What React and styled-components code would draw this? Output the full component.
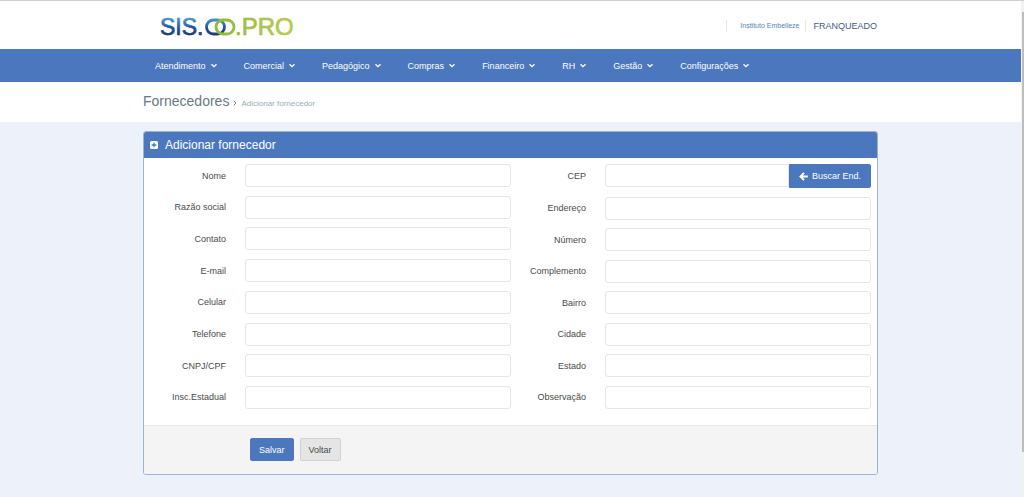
import React from 'react';
import styled, { createGlobalStyle } from 'styled-components';

const GlobalStyle = createGlobalStyle`
  * {
    box-sizing: border-box;
  }
  body {
    margin: 0;
    background: #edf1f9;
    color: #4a4a4a;
    font-family: "Liberation Sans", Arial, sans-serif;
    font-size: 9px;
  }
  input, button {
    font-family: inherit;
    font-size: inherit;
  }
  a {
    text-decoration: none;
  }
`
const Page = styled.div`
  min-height: 100vh;
  padding-right: 3px;
  border-top: 1px solid #d0d0d2;
`
const ScrollTrack = styled.div`
  position: fixed;
  top: 1px;
  right: 0;
  bottom: 0;
  width: 3px;
  padding: 11px 0 45px 1px;
  background: #f0f1f3;
`
const ScrollThumb = styled.div`
  height: 100%;
  background: #bdbdbd;
`
const Container = styled.div`
  width: 100%;
  max-width: 735px;
  margin: 0 auto;
`
const Header = styled.header`
  background: #fff;
`
const HeaderInner = styled(Container)`
  display: flex;
  align-items: center;
  justify-content: space-between;
  height: 48px;
  padding: 2px 1px 0 16px;
`
const LogoSvg = styled.svg`
  overflow: visible;
  font-size: ${({$size}) => $size};
`
const UserLinks = styled.div`
  display: flex;
  align-items: center;
`
const UserLink = styled.a`
  padding-left: ${({$large}) => $large ? '7px' : '13px'};
  padding-right: ${({$large}) => $large ? '0' : '6px'};
  border-left: 1px solid #e3e7ee;
  color: ${({$large}) => $large ? '#45598a' : '#4f86b8'};
  font-size: ${({$large}) => $large ? '9px' : '7px'};
  line-height: 12px;
`
const NavBar = styled.nav`
  background: #4b77be;
`
const NavInner = styled(Container)`
  display: flex;
  gap: 27px;
  padding: 0 12px;
`
const NavLink = styled.a`
  display: flex;
  align-items: center;
  gap: 5px;
  height: 33px;
  color: #fff;
  white-space: nowrap;
`
const PageHead = styled.div`
  background: #fff;
`
const PageHeadInner = styled(Container)`
  display: flex;
  align-items: baseline;
  gap: 4px;
  height: 40px;
  padding-top: 11px;
  h1 {
    margin: 0;
    color: #697882;
    font-size: 14px;
    font-weight: normal;
    line-height: 17px;
  }
  small {
    color: #9eacb4;
    font-size: 8px;
  }
`
const Panel = styled.form`
  display: block;
  margin-top: 9px;
  overflow: hidden;
  border: 1px solid #9bb3d3;
  border-radius: 3px;
  background: #fff;
`
const PanelTitle = styled.div`
  display: flex;
  align-items: center;
  gap: 7px;
  height: 26px;
  padding: 0 6px;
  background: #4b77be;
  color: #fff;
  h2 {
    margin: 0;
    font-size: 12px;
    font-weight: normal;
    line-height: 14px;
  }
`
const Fields = styled.div`
  display: grid;
  grid-template-columns: 1fr 1fr;
  padding: 6px 6px 16px 7px;
`
const Column = styled.div`
  display: flex;
  flex-direction: column;
  justify-content: space-between;
  min-height: 245px;
`
const FieldRow = styled.div`
  display: grid;
  grid-template-columns: 75px 1fr;
  gap: 19px;
  align-items: center;
  label {
    text-align: right;
    white-space: nowrap;
  }
`
const TextInput = styled.input`
  width: 100%;
  min-width: 0;
  height: 23px;
  padding: 0 8px;
  border: 1px solid #e3e5e8;
  border-radius: ${({$joined}) => $joined ? '3px 0 0 3px' : '3px'};
  background: #fff;
  color: #333;
  outline: none;
`
const InputGroup = styled.div`
  display: flex;
`
const Button = styled.button`
  display: flex;
  align-items: center;
  gap: 4px;
  height: 23px;
  padding: 0 8px;
  border: 1px solid ${({$primary}) => $primary ? '#4b77be' : '#d2d2d2'};
  border-radius: 2px;
  background: ${({$primary}) => $primary ? '#4b77be' : '#e5e5e5'};
  color: ${({$primary}) => $primary ? '#fff' : '#4a4a4a'};
  white-space: nowrap;
  cursor: pointer;
`
const SearchButton = styled(Button)`
  height: 24px;
  padding: 0 9px;
  border-radius: 0 2px 2px 0;
`
const Actions = styled.div`
  display: flex;
  gap: 6px;
  padding: 12px 106px 13px;
  border-top: 1px solid #e5e5e5;
  background: #f4f4f4;
`

const menu = ['Atendimento', 'Comercial', 'Pedagógico', 'Compras', 'Financeiro', 'RH', 'Gestão', 'Configurações']

const leftFields = [
  ['nome', 'Nome'],
  ['razao', 'Razão social'],
  ['contato', 'Contato'],
  ['email', 'E-mail'],
  ['celular', 'Celular'],
  ['telefone', 'Telefone'],
  ['cnpj', 'CNPJ/CPF'],
  ['inscricao', 'Insc.Estadual'],
]

const rightFields = [
  ['endereco', 'Endereço'],
  ['numero', 'Número'],
  ['complemento', 'Complemento'],
  ['bairro', 'Bairro'],
  ['cidade', 'Cidade'],
  ['estado', 'Estado'],
  ['observacao', 'Observação'],
]

function Logo () {
  return (
    <LogoSvg $size="23px" width="144" height="24" viewBox="0 0 144 24" role="img" aria-label="SIS.OO.PRO">
      <defs>
        <linearGradient id="blue" gradientUnits="userSpaceOnUse" x1="0" y1="5" x2="0" y2="21">
          <stop offset="0" stopColor="#4397c9" />
          <stop offset="0.6" stopColor="#1f4f96" />
          <stop offset="1" stopColor="#1b3a7c" />
        </linearGradient>
        <linearGradient id="green" gradientUnits="userSpaceOnUse" x1="55" y1="0" x2="138" y2="0">
          <stop offset="0" stopColor="#8fb936" />
          <stop offset="1" stopColor="#b7cf50" />
        </linearGradient>
      </defs>
      <text x="1" y="21" fill="url(#blue)" stroke="url(#blue)" strokeWidth="0.7">SIS.</text>
      <rect x="47.5" y="6" width="18" height="14" rx="7" fill="none" stroke="url(#blue)" strokeWidth="2.8" />
      <rect x="57" y="6" width="18" height="14" rx="7" fill="none" stroke="url(#green)" strokeWidth="2.8" />
      <text x="76" y="21" fontSize="24" fill="url(#green)" stroke="url(#green)" strokeWidth="0.7">.PRO</text>
    </LogoSvg>
  )
}

function Chevron () {
  return (
    <svg width="6" height="5" viewBox="0 0 6 5" fill="none" stroke="#fff" strokeWidth="1.3">
      <path d="M0.5 1.2 L3 3.7 L5.5 1.2" />
    </svg>
  )
}

function PlusSquare () {
  return (
    <svg width="8" height="8" viewBox="0 0 8 8">
      <rect width="8" height="8" rx="1.5" fill="#fff" />
      <path d="M4 1.7 V6.3 M1.7 4 H6.3" stroke="#4b77be" strokeWidth="1.3" />
    </svg>
  )
}

function ArrowLeft () {
  return (
    <svg width="9" height="9" viewBox="0 0 9 9" fill="none" stroke="#fff" strokeWidth="2">
      <path d="M5 0.9 L1.5 4.5 L5 8.1 M1.7 4.5 H8.8" />
    </svg>
  )
}

function Field ({ id, label }) {
  return (
    <FieldRow>
      <label htmlFor={id}>{label}</label>
      <TextInput id={id} type="text" />
    </FieldRow>
  )
}

export default function App () {
  return (
    <Page>
      <GlobalStyle />
      <Header>
        <HeaderInner>
          <Logo />
          <UserLinks>
            <UserLink href="#">Instituto Embelleze</UserLink>
            <UserLink href="#" $large>FRANQUEADO</UserLink>
          </UserLinks>
        </HeaderInner>
      </Header>
      <NavBar>
        <NavInner>
          {menu.map(item => (
            <NavLink href="#" key={item}>
              {item}
              <Chevron />
            </NavLink>
          ))}
        </NavInner>
      </NavBar>
      <PageHead>
        <PageHeadInner>
          <h1>Fornecedores</h1>
          <svg width="4" height="6" viewBox="0 0 4 6" fill="none" stroke="#7f8c94">
            <path d="M0.7 0.7 L3 3 L0.7 5.3" />
          </svg>
          <small>Adicionar fornecedor</small>
        </PageHeadInner>
      </PageHead>
      <Container>
        <Panel onSubmit={e => e.preventDefault()}>
          <PanelTitle>
            <PlusSquare />
            <h2>Adicionar fornecedor</h2>
          </PanelTitle>
          <Fields>
            <Column>
              {leftFields.map(([id, label]) => <Field key={id} id={id} label={label} />)}
            </Column>
            <Column>
              <FieldRow>
                <label htmlFor="cep">CEP</label>
                <InputGroup>
                  <TextInput id="cep" type="text" $joined />
                  <SearchButton type="button" $primary>
                    <ArrowLeft />
                    Buscar End.
                  </SearchButton>
                </InputGroup>
              </FieldRow>
              {rightFields.map(([id, label]) => <Field key={id} id={id} label={label} />)}
            </Column>
          </Fields>
          <Actions>
            <Button type="submit" $primary>Salvar</Button>
            <Button type="button">Voltar</Button>
          </Actions>
        </Panel>
      </Container>
      <ScrollTrack>
        <ScrollThumb />
      </ScrollTrack>
    </Page>
  )
}
